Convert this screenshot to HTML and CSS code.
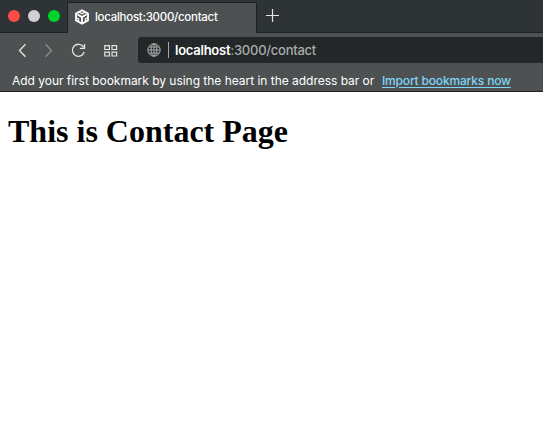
FILE: index.html
```html
<!DOCTYPE html>
<html lang="en">
<head>
<meta charset="utf-8">
<title>Contact</title>
<link rel="stylesheet" href="styles.css">
</head>
<body>
<header class="browser">
  <div class="tabs">
    <div class="lights"><span class="light close"></span><span class="light minimize"></span><span class="light expand"></span></div>
    <div class="tab">
      <svg class="favicon" width="16" height="16" viewBox="0 0 16 16" fill="none" stroke="#fff" stroke-width="1.8"><path d="M8 1.2l6 3.4v6.8l-6 3.4-6-3.4V4.6z"/><path d="M3.5 5.5L8 8.1l4.5-2.6M8 8.1v6.7"/><path stroke-width="1.2" d="M5 3l3 1.8L11 3M2 8.4l2.6 1.5v3M14 8.4l-2.6 1.5v3"/></svg>
      <span class="tab-title">localhost:3000/contact</span>
    </div>
    <div class="new-tab"><svg width="13" height="13" viewBox="0 0 13 13"><path stroke="#e4e5e5" stroke-width="1.2" d="M6.5 0v13M0 6.5h13"/></svg></div>
  </div>
  <nav class="toolbar">
    <svg class="controls" width="138" height="26" viewBox="0 0 138 26" fill="none" stroke="#e5e5e5" stroke-width="1.3">
      <path d="M25.5 7.3l-6 6.2 6 6.2"/>
      <path stroke="#8b8d8e" d="M45.5 7.3l6 6.2-6 6.2"/>
      <path d="M83.6 10.2A6 6 0 1 0 84.2 15M84.5 7v4.3h-4.6"/>
      <path stroke-width="1.2" d="M104.8 8.6h4.6v3.9h-4.6zM112 8.6h4.6v3.9H112zM104.8 15.1h4.6V19h-4.6zM112 15.1h4.6V19H112z"/>
    </svg>
    <div class="address">
      <svg class="globe" width="14" height="14" viewBox="0 0 14 14" fill="none" stroke="#b0b3b3"><circle cx="7" cy="7" r="6.2"/><ellipse cx="7" cy="7" rx="2.9" ry="6.2"/><path d="M7 1v12M1 7h12M2 4h10M2 10h10" stroke-width=".9"/></svg>
      <span class="divider"></span>
      <span class="url"><b>localhost</b>:3000/contact</span>
    </div>
  </nav>
  <div class="bookmarks"><span class="hint">Add your first bookmark by using the heart in the address bar or</span><a class="import" href="#">Import bookmarks now</a></div>
</header>
<main class="page"><h1>This is Contact Page</h1></main>
</body>
</html>
```
FILE: styles.css
```css
* { box-sizing: border-box; }
body { margin: 0; background: #fff; overflow: hidden; }
.browser { height: 92px; background: #4e5152; border-bottom: 1px solid #201f26; font-family: Inter, "Liberation Sans", sans-serif; font-size: 12px; color: #fff; }
.tabs { display: flex; height: 33px; background: #2e3335; }
.lights { display: flex; width: 67px; padding: 10px 0 0 8px; gap: 8px; border-bottom: 1px solid #1e2122; }
.light { width: 12px; height: 12px; border-radius: 50%; }
.close { background: #ff4b47; }
.minimize { background: #d2d0d2; }
.expand { background: #00d42b; }
.tab { display: flex; align-items: center; width: 190px; height: 31px; margin-top: 2px; padding: 0 0 2px 6px; background: #4e5152; border: 1px solid #1e2122; border-bottom: 0; }
.tab-title { margin-left: 5px; font-size: 11.5px; font-weight: 500; line-height: 16px; letter-spacing: -.28px; white-space: nowrap; }
.favicon { flex: none; }
.new-tab { flex: 1; padding: 9px 0 0 9px; border-bottom: 1px solid #1e2122; }
.new-tab svg { display: block; }
.toolbar { display: flex; height: 30px; padding-top: 4px; }
.controls { flex: none; }
.address { display: flex; align-items: center; flex: 1; height: 26px; padding-left: 9px; border-radius: 3px 0 0 3px; background: #232728; }
.globe { flex: none; }
.divider { width: 1px; height: 16px; margin: 0 6px 0 7px; background: #a4a7a7; }
.url { font-size: 13px; font-weight: 500; letter-spacing: -.25px; color: #a9acad; }
.url b { font-weight: 600; color: #fff; }
.bookmarks { display: flex; align-items: center; height: 28px; padding: 7px 0 0 12px; white-space: nowrap; line-height: 20px; }
.hint { width: 370px; letter-spacing: -.025px; }
.import { color: #7dd5f8; font-weight: 500; letter-spacing: -.17px; text-underline-offset: 2px; }
.page { padding: 0 8px; font-family: "Liberation Serif", serif; }
h1 { margin: 21px 0 0; font-size: 32px; line-height: 37px; color: #000; }
```
